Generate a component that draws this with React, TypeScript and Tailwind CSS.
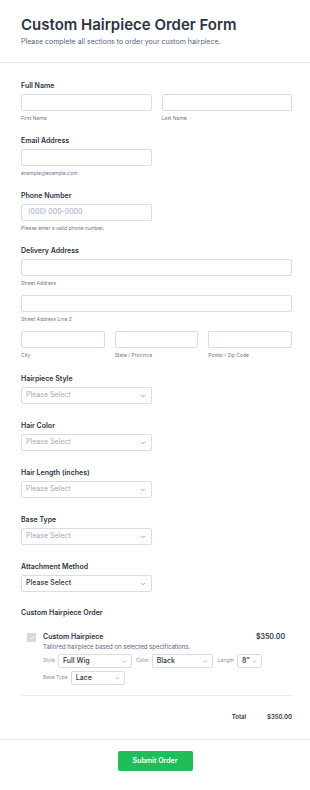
import { ChevronDown, Check } from 'lucide-react';

const FONT = { fontFamily: 'Inter, "Noto Sans", sans-serif' };

function Label({ children }: { children: React.ReactNode }) {
    return <div className="text-[7px] leading-[10px] font-semibold text-[#2c3345] mb-[3px]">{children}</div>;
}

function Sub({ children }: { children: React.ReactNode }) {
    return <div className="text-[5px] leading-[7px] text-[#6f7690] mt-[4px]">{children}</div>;
}

function Input({ placeholder, className = '' }: { placeholder?: string; className?: string }) {
    return (
        <div className={`h-[17px] border border-[#d8dce6] rounded-[2px] bg-white flex items-center px-[6px] ${className}`}>
            {placeholder && <span className="text-[7px] text-[#a3a9bd]">{placeholder}</span>}
        </div>
    );
}

function Select({ value = 'Please Select', filled = false }: { value?: string; filled?: boolean }) {
    return (
        <div className="w-[131px] h-[17px] border border-[#d8dce6] rounded-[2px] bg-white flex items-center justify-between pl-[4px] pr-[5px]">
            <span className={`text-[7px] ${filled ? 'text-[#2c3345] font-medium' : 'text-[#a3a9bd]'}`}>{value}</span>
            <ChevronDown className="w-[6px] h-[6px] text-[#7c8396]" strokeWidth={3} />
        </div>
    );
}

function MiniSelect({ value, width }: { value: string; width: string }) {
    return (
        <div className={`${width} h-[14px] border border-[#d8dce6] rounded-[2px] bg-white flex items-center justify-between pl-[4px] pr-[4px]`}>
            <span className="text-[7px] font-medium text-[#2c3345]">{value}</span>
            <ChevronDown className="w-[5px] h-[5px] text-[#7c8396]" strokeWidth={3} />
        </div>
    );
}

export default function App() {
    return (
        <div className="w-[310px] min-h-[790px] bg-white" style={FONT}>
            {/* Header */}
            <div className="pl-[21px] pr-[18px] pt-[16px] pb-[15px] border-b border-[#eaecf0]">
                <h1 className="text-[15px] leading-[18px] font-semibold text-[#2c3345]">Custom Hairpiece Order Form</h1>
                <p className="text-[7px] leading-[10px] text-[#4f5f85] mt-[3px]">
                    Please complete all sections to order your custom hairpiece.
                </p>
            </div>

            <div className="pl-[21px] pr-[18px] pt-[18px]">
                {/* Full Name */}
                <Label>Full Name</Label>
                <div className="grid grid-cols-2 gap-[10px]">
                    <div>
                        <Input />
                        <Sub>First Name</Sub>
                    </div>
                    <div>
                        <Input />
                        <Sub>Last Name</Sub>
                    </div>
                </div>

                <div className="mt-[14px]">
                    <Label>Email Address</Label>
                    <Input className="w-[131px]" />
                    <Sub>example@example.com</Sub>
                </div>

                <div className="mt-[14px]">
                    <Label>Phone Number</Label>
                    <Input className="w-[131px]" placeholder="(000) 000-0000" />
                    <Sub>Please enter a valid phone number.</Sub>
                </div>

                <div className="mt-[14px]">
                    <Label>Delivery Address</Label>
                    <Input />
                    <Sub>Street Address</Sub>
                    <Input className="mt-[8px]" />
                    <Sub>Street Address Line 2</Sub>
                    <div className="grid grid-cols-3 gap-[10px] mt-[8px]">
                        <div>
                            <Input />
                            <Sub>City</Sub>
                        </div>
                        <div>
                            <Input />
                            <Sub>State / Province</Sub>
                        </div>
                        <div>
                            <Input />
                            <Sub>Postal / Zip Code</Sub>
                        </div>
                    </div>
                </div>

                <div className="mt-[15px]">
                    <Label>Hairpiece Style</Label>
                    <Select />
                </div>
                <div className="mt-[17px]">
                    <Label>Hair Color</Label>
                    <Select />
                </div>
                <div className="mt-[17px]">
                    <Label>Hair Length (inches)</Label>
                    <Select />
                </div>
                <div className="mt-[17px]">
                    <Label>Base Type</Label>
                    <Select />
                </div>
                <div className="mt-[17px]">
                    <Label>Attachment Method</Label>
                    <Select filled />
                </div>

                {/* Product */}
                <div className="mt-[16px]">
                    <Label>Custom Hairpiece Order</Label>
                    <div className="mt-[14px] pl-[6px] pr-[7px] pb-[10px] border-b border-[#eaecf0] flex gap-[7px]">
                        <div className="w-[9px] h-[9px] mt-[1px] bg-[#d5d8df] rounded-[1px] flex items-center justify-center shrink-0">
                            <Check className="w-[6px] h-[6px] text-white" strokeWidth={4} />
                        </div>
                        <div className="flex-1">
                            <div className="flex justify-between">
                                <span className="text-[7px] leading-[10px] font-semibold text-[#2c3345]">Custom Hairpiece</span>
                                <span className="text-[7px] leading-[10px] font-semibold text-[#2c3345]">$350.00</span>
                            </div>
                            <div className="text-[6px] leading-[9px] text-[#57647e]">
                                Tailored hairpiece based on selected specifications.
                            </div>
                            <div className="flex items-center mt-[3px]">
                                <span className="text-[5px] text-[#8a91a5] mr-[3px]">Style</span>
                                <MiniSelect value="Full Wig" width="w-[74px]" />
                                <span className="text-[5px] text-[#8a91a5] ml-[4px] mr-[3px]">Color</span>
                                <MiniSelect value="Black" width="w-[61px]" />
                                <span className="text-[5px] text-[#8a91a5] ml-[5px] mr-[3px]">Length</span>
                                <MiniSelect value={'8"'} width="w-[25px]" />
                            </div>
                            <div className="flex items-center mt-[3px]">
                                <span className="text-[5px] text-[#8a91a5] mr-[3px]">Base Type</span>
                                <MiniSelect value="Lace" width="w-[54px]" />
                            </div>
                        </div>
                    </div>
                    <div className="flex justify-end items-center gap-[21px] pt-[16px] pb-[18px]">
                        <span className="text-[6px] font-semibold text-[#2c3345]">Total</span>
                        <span className="text-[6px] font-semibold text-[#2c3345]">$350.00</span>
                    </div>
                </div>
            </div>

            <div className="border-t border-[#eaecf0] flex justify-center pt-[11px] pb-[17px]">
                <button className="w-[75px] h-[20px] rounded-[2px] bg-[#1fbe5a] text-white text-[7px] font-semibold">
                    Submit Order
                </button>
            </div>
        </div>
    );
}
